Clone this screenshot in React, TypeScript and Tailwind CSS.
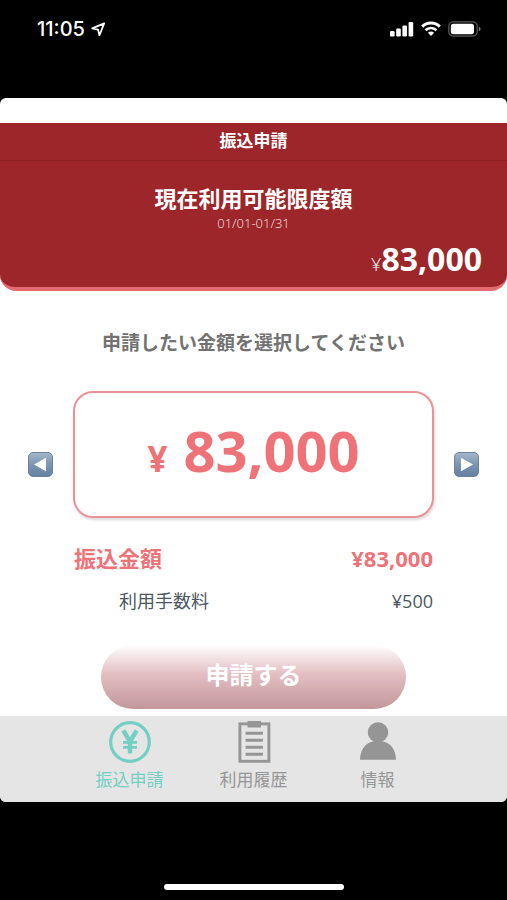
import React, { useState } from "react";

const jp = "font-['Noto_Sans','Noto_Sans_CJK_JP',sans-serif]";
const num = "font-['Open_Sans','Noto_Sans_CJK_JP',sans-serif]";

const steps = [83000, 82000, 81000, 80000];
const format = (n: number) => n.toLocaleString("en-US");

function StatusBar() {
  return (
    <div className="flex h-[98px] items-start justify-between pt-[17px] pr-[26px] pl-[37px] text-white">
      <div className="flex items-center gap-[6px]">
        <span className="font-['Inter',sans-serif] text-[20px] leading-6 font-medium">11:05</span>
        <svg width="15" height="15" viewBox="0 0 15 15" aria-hidden="true">
          <path
            d="M13.2 1.4 L1.2 6.4 L7.1 7.7 L8.4 13.4 Z"
            fill="none"
            stroke="currentColor"
            strokeWidth="1.7"
            strokeLinejoin="round"
          />
        </svg>
      </div>
      <div className="flex h-6 items-center gap-[7px]">
        <svg width="24" height="16" viewBox="0 0 24 16" fill="currentColor" aria-hidden="true">
          <rect x="0" y="10" width="4.6" height="5.4" rx="1.2" />
          <rect x="6.2" y="7.4" width="4.6" height="8" rx="1.2" />
          <rect x="12.4" y="4.4" width="4.6" height="11" rx="1.2" />
          <rect x="18.6" y="1" width="4.6" height="14.4" rx="1.2" />
        </svg>
        <svg width="20" height="16" viewBox="0 0 20 16" aria-hidden="true">
          <path d="M1.2 5.6 A12.6 12.6 0 0 1 18.8 5.6" fill="none" stroke="currentColor" strokeWidth="2.9" />
          <path d="M4.5 9.2 A8 8 0 0 1 15.5 9.2" fill="none" stroke="currentColor" strokeWidth="2.7" />
          <path d="M10 15 L6.9 11.8 A4.6 4.6 0 0 1 13.1 11.8 Z" fill="currentColor" />
        </svg>
        <svg width="33" height="16" viewBox="0 0 33 16" aria-hidden="true">
          <rect x="0.8" y="0.8" width="28.4" height="14.4" rx="4.4" fill="none" stroke="#5b5b5b" strokeWidth="1.3" />
          <rect x="2.8" y="2.8" width="23.2" height="10.4" rx="2.6" fill="currentColor" />
          <path d="M30.8 5.4 Q32.6 6.2 32.6 8 Q32.6 9.8 30.8 10.6 Z" fill="#7a7a7a" />
        </svg>
      </div>
    </div>
  );
}

function ArrowButton({ direction, onClick }: { direction: "left" | "right"; onClick: () => void }) {
  return (
    <button
      type="button"
      aria-label={direction === "left" ? "前の金額" : "次の金額"}
      onClick={onClick}
      className="mt-5 flex size-[25px] shrink-0 items-center justify-center rounded-[5px] border border-[#6b819c] bg-linear-to-b from-[#a3b5c9] via-[#7c95b1] to-[#6681a2] text-white"
    >
      <svg width="15" height="15" viewBox="0 0 15 15" fill="currentColor" aria-hidden="true">
        <path d={direction === "left" ? "M13 0.8 V14.2 L1 7.5 Z" : "M2 0.8 V14.2 L14 7.5 Z"} />
      </svg>
    </button>
  );
}

function YenIcon() {
  return (
    <svg width="42" height="42" viewBox="0 0 42 42" fill="none" stroke="currentColor" aria-hidden="true">
      <circle cx="21" cy="21" r="19.3" strokeWidth="3.2" />
      <path d="M14.3 9.5 L21 20.5 L27.7 9.5 M21 20 V32.5" strokeWidth="4.4" />
      <path d="M14 21.4 H28 M14 26.4 H28" strokeWidth="2.8" />
    </svg>
  );
}

function ClipboardIcon() {
  return (
    <svg width="42" height="42" viewBox="0 0 42 42" fill="none" stroke="currentColor" aria-hidden="true">
      <rect x="6.9" y="2.9" width="29" height="37.4" strokeWidth="2.9" />
      <rect x="14.5" y="0" width="13.5" height="6.5" fill="currentColor" stroke="none" />
      <path d="M12.6 12.2 H30 M12.6 19.2 H30 M12.6 26.2 H30 M12.6 33.2 H30" strokeWidth="2.9" />
    </svg>
  );
}

function PersonIcon() {
  return (
    <svg width="42" height="42" viewBox="0 0 42 42" fill="currentColor" aria-hidden="true">
      <circle cx="21" cy="11.4" r="10.2" />
      <path d="M3 38.8 C3 28.5 9 21.2 16.8 20.2 H25.2 C33 21.2 39 28.5 39 38.8 Z" />
    </svg>
  );
}

const tabs = [
  { label: "振込申請", Icon: YenIcon, active: true },
  { label: "利用履歴", Icon: ClipboardIcon, active: false },
  { label: "情報", Icon: PersonIcon, active: false },
];

export default function App() {
  const [index, setIndex] = useState(0);
  const amount = format(steps[index]);

  return (
    <div className={`flex min-h-screen flex-col bg-black ${jp}`} lang="ja">
      <StatusBar />
      <div className="flex flex-col overflow-hidden rounded-[6px] bg-white pt-[25px]">
        <header className="border-b border-[#8a2024] bg-[#9c2629] pb-[2px] text-center text-white">
          <h1 className="text-[17px] leading-[35px] font-bold">振込申請</h1>
        </header>
        <section className="rounded-b-[16px] border-b-4 border-[#e66b70] bg-[#9c2629] pt-[21px] text-white">
          <h2 className="text-center text-[22px] leading-8 font-bold">現在利用可能限度額</h2>
          <p className="pt-px text-center text-[13px] leading-4 font-light text-[#f0d6d7]">01/01-01/31</p>
          <p className={`flex items-baseline justify-end pt-[6px] pr-[25px] pb-[6px] ${num}`}>
            <span className="text-[18px] leading-none font-light">¥</span>
            <span className="text-[32px] leading-11 font-bold">83,000</span>
          </p>
        </section>

        <main className="flex flex-col pt-9 pb-[7px]">
          <p className="text-center text-[19px] leading-8 font-bold text-[#727272]">
            申請したい金額を選択してください
          </p>
          <div className="mt-8 flex items-center gap-5 px-7">
            <ArrowButton direction="left" onClick={() => setIndex(Math.max(0, index - 1))} />
            <div
              className={`flex h-[127px] flex-1 items-baseline justify-center gap-4 rounded-[20px] border-2 border-[#eb9296] pt-[17px] font-bold text-[#ed7379] shadow-[1px_2px_3px_rgba(0,0,0,0.15)] ${num}`}
            >
              <span className="text-[35px] leading-none">¥</span>
              <span className="text-[56px] leading-20">{amount}</span>
            </div>
            <ArrowButton direction="right" onClick={() => setIndex(Math.min(steps.length - 1, index + 1))} />
          </div>

          <dl className="px-[74px] pt-[22px]">
            <div className="flex items-center justify-between text-[22px] leading-9 font-bold text-[#ed7379]">
              <dt>振込金額</dt>
              <dd className={num}>¥{amount}</dd>
            </div>
            <div className="flex items-center justify-between pt-[9px] pl-[45px] text-[18px] leading-8 text-[#4c5763]">
              <dt>利用手数料</dt>
              <dd className={num}>¥500</dd>
            </div>
          </dl>

          <button
            type="button"
            className="mx-[101px] mt-7 h-16 rounded-full bg-linear-to-b from-white via-[#e3bfc3] via-45% to-[#c2979a] pb-1 text-[24px] font-bold text-white"
          >
            申請する
          </button>
        </main>

        <nav className="h-[86px] bg-[#e5e5e5]">
          <div className="mx-auto grid max-w-[372px] grid-cols-3 pt-[5px]">
            {tabs.map(({ label, Icon, active }) => (
              <a
                key={label}
                href="#"
                className={`flex flex-col items-center gap-[5px] text-[17px] leading-6 ${active ? "text-[#73cfc2]" : "text-[#959595]"}`}
              >
                <Icon />
                <span>{label}</span>
              </a>
            ))}
          </div>
        </nav>
      </div>
      <div className="mx-auto mt-auto mb-[10px] h-[6px] w-[180px] rounded-full bg-white" />
    </div>
  );
}
